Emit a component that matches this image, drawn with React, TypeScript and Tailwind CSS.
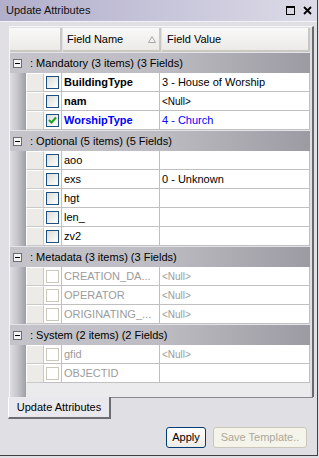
import React from "react"

type Row = {
  name: string
  value?: string
  kind: "bold" | "blue" | "normal" | "disabled"
  checked?: boolean
}

type Group = { title: string; rows: Row[] }

const groups: Group[] = [
  {
    title: ": Mandatory (3 items) (3 Fields)",
    rows: [
      { name: "BuildingType", value: "3 - House of Worship", kind: "bold" },
      { name: "nam", value: "<Null>", kind: "bold" },
      { name: "WorshipType", value: "4 - Church", kind: "blue", checked: true },
    ],
  },
  {
    title: ": Optional (5 items) (5 Fields)",
    rows: [
      { name: "aoo", kind: "normal" },
      { name: "exs", value: "0 - Unknown", kind: "normal" },
      { name: "hgt", kind: "normal" },
      { name: "len_", kind: "normal" },
      { name: "zv2", kind: "normal" },
    ],
  },
  {
    title: ": Metadata (3 items) (3 Fields)",
    rows: [
      { name: "CREATION_DA...", value: "<Null>", kind: "disabled" },
      { name: "OPERATOR", value: "<Null>", kind: "disabled" },
      { name: "ORIGINATING_...", value: "<Null>", kind: "disabled" },
    ],
  },
  {
    title: ": System (2 items) (2 Fields)",
    rows: [
      { name: "gfid", value: "<Null>", kind: "disabled" },
      { name: "OBJECTID", kind: "disabled" },
    ],
  },
]

function Strip() {
  return <div className="w-[16px] h-full shrink-0 bg-gradient-to-r from-[#dddde2] via-[#c4c4ca] to-[#9e9ea6]" />
}

function CheckBox({ disabled, checked }: { disabled: boolean; checked?: boolean }) {
  return (
    <div
      className={
        disabled
          ? "w-[13px] h-[13px] border border-[#cac8bb] bg-white"
          : "w-[13px] h-[13px] border border-[#1c5180] bg-gradient-to-br from-[#dcdcd7] to-white flex items-center justify-center"
      }
    >
      {checked && (
        <svg width="9" height="9" viewBox="0 0 9 9">
          <path d="M1 4 L3.5 6.5 L8 1.5" fill="none" stroke="#21a121" strokeWidth="2" />
        </svg>
      )}
    </div>
  )
}

function DataRow({ row }: { row: Row }) {
  const disabled = row.kind === "disabled"
  const nameCls =
    row.kind === "bold"
      ? "font-bold text-black"
      : row.kind === "blue"
        ? "font-bold text-[#0000ff]"
        : row.kind === "disabled"
          ? "text-[#9c9c9c]"
          : "text-black"
  const valueCls = row.kind === "blue" ? "text-[#0000ff]" : disabled ? "text-[#9c9c9c]" : "text-black"
  const isNull = row.value === "<Null>"
  return (
    <div className="flex h-[19px] shrink-0">
      <Strip />
      <div className="w-[18px] shrink-0 bg-[#ecebe8] border-t border-l border-white border-r border-b border-r-[#c9c9c9] border-b-[#c9c9c9]" />
      <div className="w-[18px] shrink-0 bg-white border-b border-r border-[#c0c0c0] flex items-center justify-center">
        <CheckBox disabled={disabled} checked={row.checked} />
      </div>
      <div className={`w-[98px] shrink-0 bg-white border-b border-r border-[#c0c0c0] pl-[2px] flex items-center whitespace-nowrap overflow-hidden ${nameCls}`}>
        {row.name}
      </div>
      <div className={`flex-1 bg-white border-b border-r border-[#c0c0c0] pl-[2px] flex items-center whitespace-nowrap overflow-hidden ${valueCls} ${isNull ? "text-[10px]" : ""}`}>
        {row.value ?? ""}
      </div>
    </div>
  )
}

function GroupHeader({ title }: { title: string }) {
  return (
    <div className="flex items-center h-[21px] shrink-0 border-t border-[#e4e4e8] bg-gradient-to-r from-[#c4c4ca] via-[#bcbcc2] to-[#9c9ba3] text-black">
      <div className="ml-[3px] w-[9px] h-[9px] border border-[#6e6e6e] bg-[#f4f4f4] flex items-center justify-center">
        <div className="w-[5px] h-[1px] bg-black" />
      </div>
      <span className="ml-[8px] whitespace-nowrap">{title}</span>
    </div>
  )
}

export default function App() {
  return (
    <div className="w-[319px] h-[458px] bg-[#e0dfe3]">
      <div className="w-[318px] h-[456px] flex flex-col bg-[#e0dfe3] border-r border-b border-[#404040] font-['Liberation_Sans',Arial,sans-serif] text-[11px] text-black">
        {/* Title bar */}
        <div className="h-[22px] shrink-0 flex items-center justify-between pl-[6px] pr-[5px] bg-gradient-to-r from-[#b1aecb] to-[#dcdbe7] border-b border-[#f2f2f6]">
          <span className="text-[#111]">Update Attributes</span>
          <div className="flex items-center gap-[8px]">
            <svg width="9" height="9" viewBox="0 0 9 9">
              <rect x="0.5" y="1" width="8" height="7.5" fill="none" stroke="#000" strokeWidth="1" />
              <line x1="0" y1="1" x2="9" y2="1" stroke="#000" strokeWidth="2" />
            </svg>
            <svg width="9" height="9" viewBox="0 0 9 9">
              <path d="M1 1 L8 8 M8 1 L1 8" stroke="#000" strokeWidth="1.8" />
            </svg>
          </div>
        </div>

        {/* Grid frame */}
        <div className="mt-[4px] ml-[9px] w-[305px] h-[371px] shrink-0 flex flex-col border-t border-l border-[#f6f6f8] border-r-2 border-r-[#6a6a6e] pt-[1px] pr-[2px]">
          <div className="flex h-[24px] shrink-0">
            <div className="w-[52px] shrink-0 bg-gradient-to-b from-[#f9f9f8] to-[#ebeae7] border-r-2 border-b-2 border-[#c9c8c2]" />
            <div className="w-[98px] shrink-0 ml-[1px] bg-gradient-to-b from-[#f9f9f8] to-[#ebeae7] border-r-2 border-b-2 border-[#c9c8c2] pl-[4px] flex items-center justify-between pr-[3px]">
              <span>Field Name</span>
              <svg width="8" height="7" viewBox="0 0 8 7">
                <path d="M4 0.5 L7.5 6.5 L0.5 6.5 Z" fill="none" stroke="#a8a8a8" strokeWidth="1" />
              </svg>
            </div>
            <div className="flex-1 ml-[1px] bg-gradient-to-b from-[#f9f9f8] to-[#ebeae7] border-r-2 border-b-2 border-[#c9c8c2] pl-[5px] flex items-center">
              Field Value
            </div>
          </div>
          {groups.map((g) => (
            <React.Fragment key={g.title}>
              <GroupHeader title={g.title} />
              {g.rows.map((r) => (
                <DataRow key={r.name} row={r} />
              ))}
            </React.Fragment>
          ))}
          <div className="flex flex-1">
            <Strip />
            <div className="flex-1 bg-[#ebebed]" />
          </div>
        </div>

        {/* Tabs */}
        <div className="flex h-[22px] shrink-0 ml-[8px] mr-[4px]">
          <div className="w-[103px] shrink-0 bg-[#e9e8ec] border-l border-white border-r-2 border-b-2 border-r-[#6e6e72] border-b-[#6e6e72] flex items-center justify-center">
            Update Attributes
          </div>
          <div className="flex-1 border-t border-[#8a8a8e]" />
        </div>

        {/* Buttons */}
        <div className="flex gap-[7px] mt-[8px] ml-[166px]">
          <button className="w-[40px] h-[21px] rounded-[3px] border border-[#003c74] bg-gradient-to-b from-white to-[#ecebe6] text-black flex items-center justify-center">
            Apply
          </button>
          <button className="w-[94px] h-[21px] rounded-[3px] border border-[#c9c7ba] bg-[#f5f4ea] text-[#aca899] flex items-center justify-center">
            Save Template..
          </button>
        </div>
      </div>
    </div>
  )
}
